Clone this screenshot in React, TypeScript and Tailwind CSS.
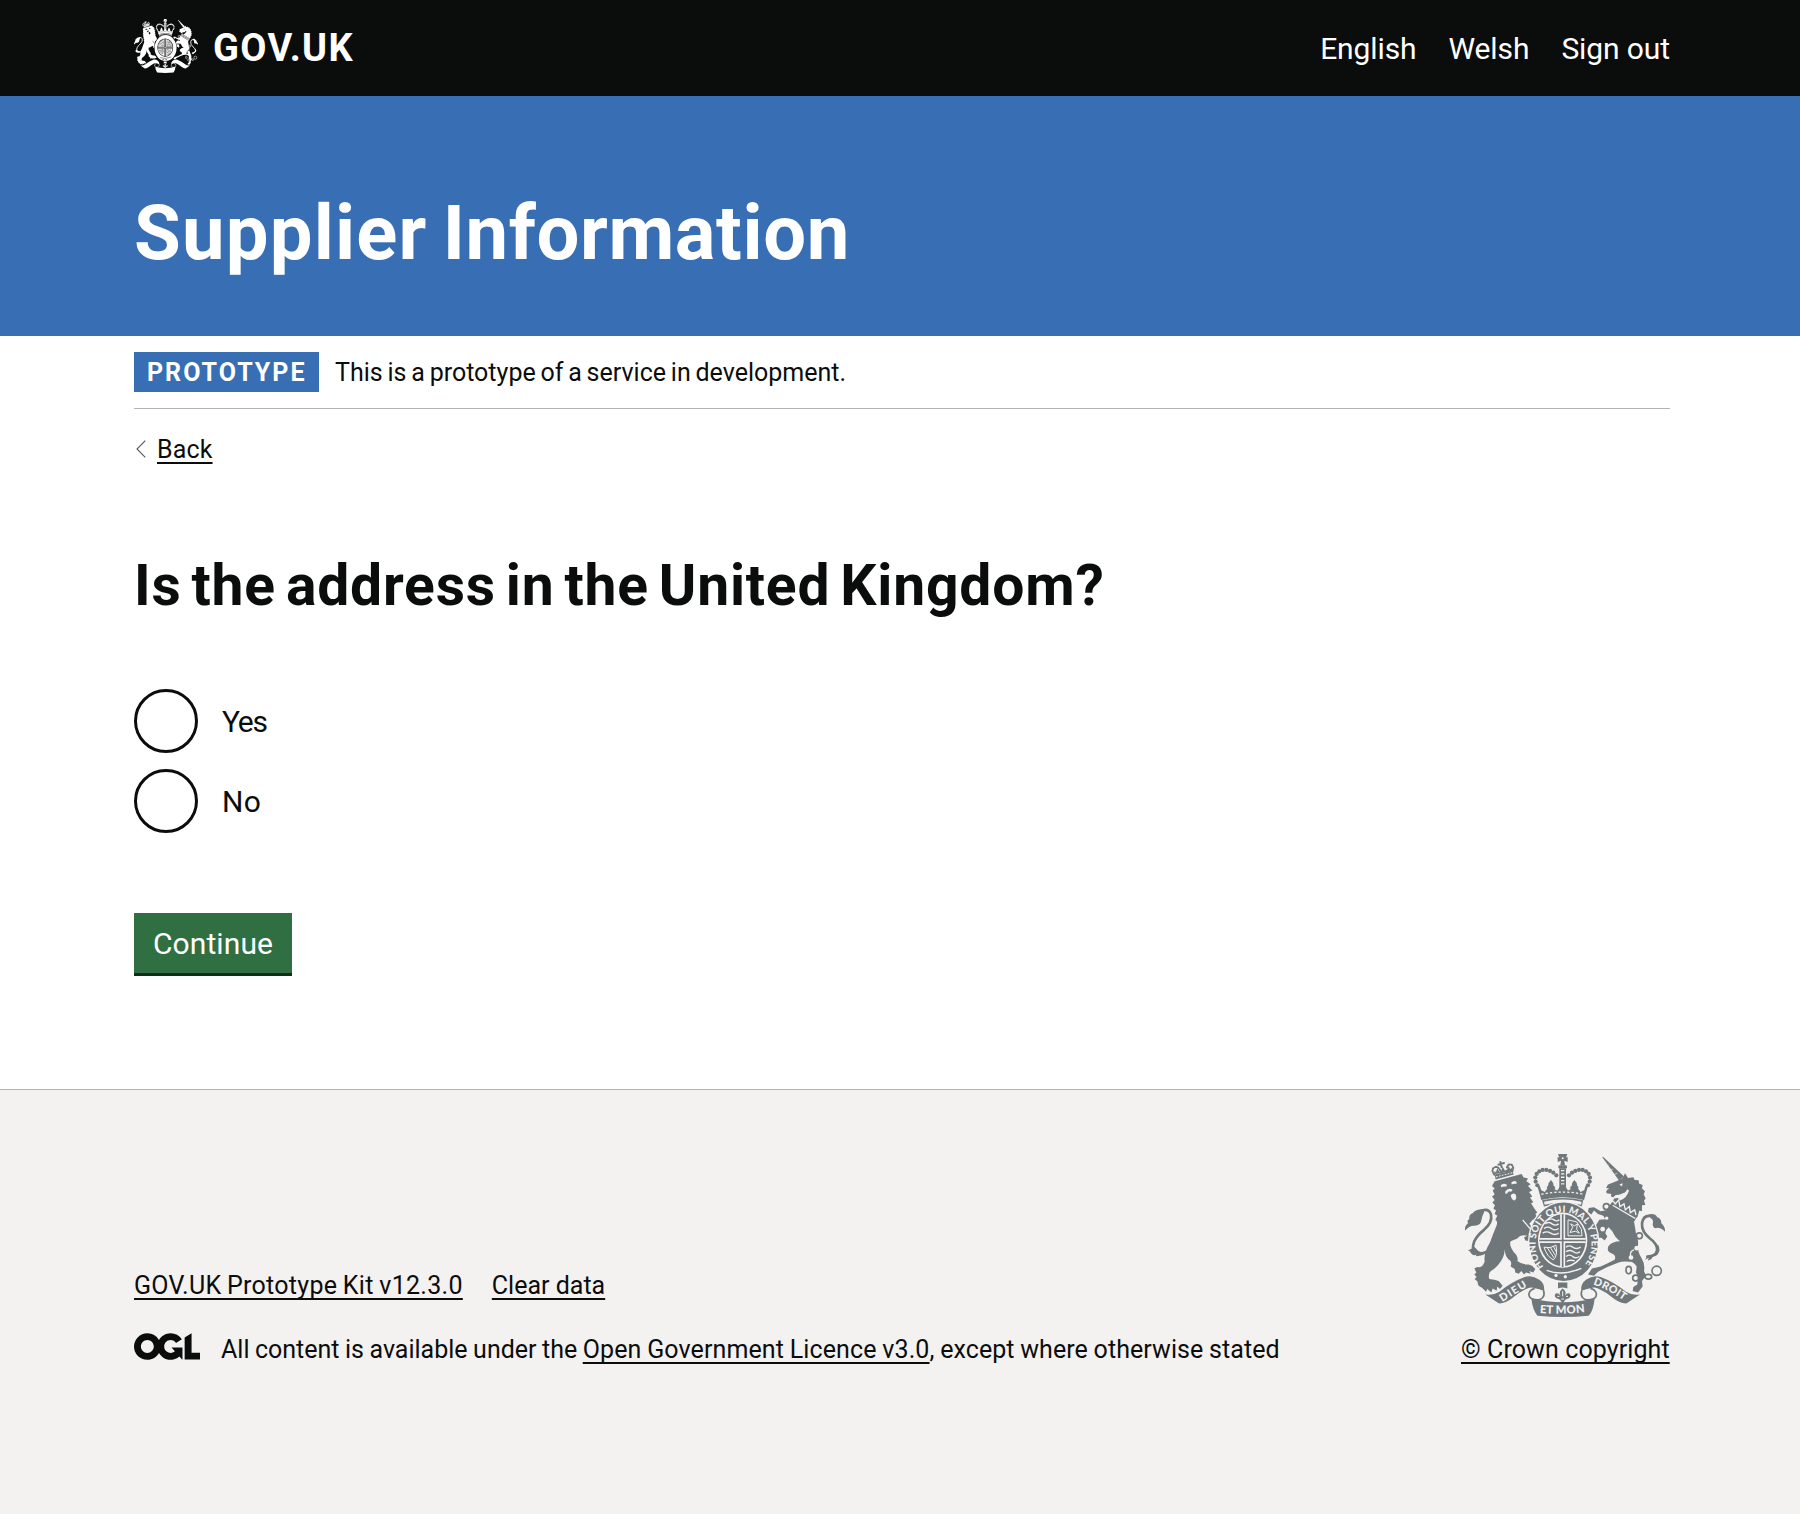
import React from "react";

type CrestProps = { className: string; ink: string; paper: string; motto?: boolean };

const OUTER_BEADS = [
  [292, 136], [287, 125], [286, 113], [290, 102], [298, 94], [308, 90], [319, 90], [330, 93], [340, 98], [349, 106],
  [444, 136], [449, 125], [450, 113], [446, 102], [438, 94], [428, 90], [417, 90], [406, 93], [396, 98], [387, 106],
];

function Crest({ className, ink, paper, motto = false }: CrestProps) {
  const id = motto ? "m" : "s";
  return (
    <svg className={className} viewBox="75 42 600 490" preserveAspectRatio="none" fill={ink} aria-hidden="true">
      {/* lion: crown */}
      <g>
        <path d="M164 104 L217 92 L221 104 L167 119 Z" />
        <path d="M166 102 L160 94 L168 96 L172 84 L178 96 L184 92 L188 80 L195 92 L202 88 L206 78 L211 88 L217 82 L216 94 Z" />
        <g fill="none" stroke={ink} strokeWidth="6" strokeLinecap="round">
          <path d="M163 104 Q152 90 163 82 Q174 77 181 92 M217 94 Q223 80 214 74 Q202 70 200 88" strokeDasharray="4 5" />
          <path d="M185 82 L181 66 M175 74 L192 69" strokeWidth="6" />
        </g>
        <path d="M168 111 L218 98" stroke={paper} strokeWidth="3" strokeDasharray="5 4" />
      </g>
      {/* lion: tail */}
      <path d="M150 328 Q135 344 112 340 Q92 334 103 304 Q112 286 132 270 Q158 248 153 224 Q148 206 128 211 Q116 215 110 228" fill="none" stroke={ink} strokeWidth="8" strokeLinecap="round" />
      <path d="M132 208 Q108 206 98 220 Q86 224 88 238 Q80 240 84 250 Q78 254 75 263 L75 273 Q90 256 104 258 Q122 256 124 242 Q126 228 132 218 Z" />
      <path d="M101 320 Q94 330 84 331 Q92 334 92 339 Q98 350 110 344 Q104 350 114 349 Q134 346 140 336 Q116 340 108 326 Z" />
      {/* lion: body */}
      <path d="M164 124 L245 102 L250 112 L264 116 L259 124 L272 133 L264 138 L277 152 L267 156 L277 170 L270 173 L280 187 L273 190 L284 207 L292 218 L286 222 L294 236 L278 240 L268 252 Q280 268 296 290 L300 296 L296 318 Q276 322 268 312 L272 304 L256 302 L252 292 L262 288 Q244 282 232 296 L212 304 Q206 316 222 338 Q236 350 232 364 Q246 376 266 374 L276 378 L286 388 L280 398 L268 394 L272 402 L258 398 L252 404 L244 394 L236 402 L226 398 L224 388 L212 380 Q216 366 210 362 Q192 350 195 322 Q194 346 184 362 Q172 382 150 396 Q144 408 148 418 Q164 420 176 424 L188 438 L180 448 L172 440 L170 453 L158 446 L154 458 L142 448 L138 456 L126 444 Q112 440 113 426 L104 418 L110 412 L103 404 L109 398 L103 386 L112 382 Q126 386 134 366 Q130 340 150 308 Q160 280 170 256 Q174 244 166 240 L172 228 L164 222 L168 212 L160 206 L165 196 L157 188 L164 180 L156 170 L164 164 L158 152 L164 146 L156 138 Z" />
      <g fill={paper}>
        <path d="M182 136 Q190 128 200 134 L200 140 Q190 138 184 142 Z M214 128 Q222 120 230 126 L229 132 Q222 130 215 134 Z" />
        <path d="M196 154 Q208 142 218 150 Q214 158 207 154 Q202 162 196 162 Z M212 166 Q220 156 227 164 Q232 176 224 182 Q214 180 212 166 Z" />
      </g>
      <path d="M248 240 Q266 262 284 282" fill="none" stroke={paper} strokeWidth="4" />
      {/* unicorn: horn, head */}
      <path d="M486 50 L491 52 L552 110 L537 122 Z" />
      <path d="M500 78 L506 75 M512 90 L519 87 M524 103 L532 100" stroke={paper} strokeWidth="2" />
      <path d="M534 122 L548 114 L555 100 L564 114 L580 112 L584 120 L596 121 L597 131 L608 135 L606 146 L615 154 L611 163 L617 176 L612 182 L616 195 L606 196 L606 214 L598 212 L592 232 L518 188 L522 176 Q548 176 554 158 Q540 166 526 166 L520 172 Q510 172 514 162 L500 160 Q495 152 508 146 L498 144 L504 134 Q520 128 534 122 Z" />
      <path d="M538 134 L548 130 L546 140 Z M528 166 Q552 168 562 148 L567 152 Q560 176 540 182 Z" fill={paper} />
      {/* unicorn: body */}
      <path d="M516 186 L592 230 L582 246 Q586 266 588 282 Q596 298 594 314 Q592 336 604 354 Q616 374 612 394 L618 408 L606 424 L608 440 L594 458 L578 454 L580 442 L592 434 L594 412 L588 398 L590 380 Q580 364 568 366 Q548 364 536 368 L502 382 L474 396 L462 408 L444 404 L456 386 L482 380 L500 372 L524 360 Q530 346 514 340 Q498 334 506 318 Q518 304 540 304 Q524 292 518 276 L506 262 Q498 268 496 280 L502 290 L494 302 L484 294 L470 294 L464 274 L452 268 L454 252 L468 256 L478 240 L496 238 L490 228 L474 222 L462 212 L454 224 L444 216 L446 204 L462 202 L482 214 L500 210 Z" />
      <path d="M572 352 Q568 334 582 330" fill="none" stroke={paper} strokeWidth="4" />
      {/* unicorn: coronet collar */}
      <path d="M518 196 L586 236 M520 184 L526 192 L536 180 L540 200 L552 192 L556 210 L568 200 L571 218 L584 210 L588 226" fill="none" stroke={paper} strokeWidth="4" />
      {/* unicorn: tail */}
      <path d="M622 350 Q650 350 652 332 Q652 312 630 296 Q604 276 606 250 Q610 226 630 228 Q644 230 648 244" fill="none" stroke={ink} strokeWidth="8" strokeLinecap="round" />
      <path d="M626 224 Q644 218 652 232 Q664 236 664 250 Q676 260 675 276 Q664 264 652 264 Q640 268 638 254 Q642 240 630 232 Z M654 314 Q662 330 656 338 Q652 350 640 348 Q634 362 624 362 L626 354 L616 360 Q620 346 634 346 Q650 340 648 320 Z" />
      {/* unicorn: chain */}
      <g fill={paper} stroke={ink} strokeWidth="5">
        <circle cx="499" cy="200" r="9" />
        <circle cx="598" cy="288" r="9" />
        <ellipse cx="566" cy="391" rx="8" ry="11" />
        <circle cx="587" cy="415" r="9" />
        <ellipse cx="625" cy="411" rx="10" ry="7" />
        <circle cx="650" cy="393" r="14" />
      </g>
      <g fill={paper}><circle cx="590" cy="325" r="7" /><circle cx="573" cy="353" r="7" /><circle cx="488" cy="268" r="7" /><circle cx="500" cy="235" r="5" /></g>

      {/* royal crown */}
      <path d="M354 42 L382 42 L378 53 L383 50 L383 66 L373 62 L375 76 L361 76 L363 62 L353 66 L353 50 L358 53 Z" />
      <circle cx="368" cy="55" r="3" fill={paper} />
      <rect x="355" y="76" width="26" height="10" rx="4" />
      {OUTER_BEADS.map(([x, y]) => (<circle key={`${x}-${y}`} cx={x} cy={y} r="6.3" />))}
      <path d="M358 86 H378 V150 H358 Z" />
      <path d="M363 92 H373 M363 102 H373 M363 112 H373 M363 122 H373 M363 132 H373" stroke={paper} strokeWidth="4" />
      <path d="M292 138 Q300 132 303 150 L314 156 L322 146 Q318 140 324 138 Q324 128 333 120 Q341 128 341 138 Q348 140 344 148 L352 152 Q360 138 368 134 Q376 138 384 152 L392 148 Q388 140 395 138 Q395 128 403 120 Q412 128 412 138 Q418 140 414 146 L422 156 L433 150 Q436 132 444 138 L432 180 Q368 164 304 180 Z" />
      <path d="M304 163 Q368 150 432 163" fill="none" stroke={paper} strokeWidth="4" strokeDasharray="7 6" />
      <path d="M306 181 Q368 168 430 181 L425 200 Q368 186 312 200 Z" />
      <path d="M313 190 Q368 177 424 190" fill="none" stroke={paper} strokeWidth="9" />

      {/* garter */}
      <ellipse cx="371" cy="306" rx="107" ry="122" fill={paper} />
      <ellipse cx="371" cy="306" rx="103" ry="118" />
      <ellipse cx="368" cy="301" rx="74" ry="83" fill={paper} />
      <ellipse cx="368" cy="301" rx="69" ry="78" />
      <g stroke={paper} fill="none">
        <path d="M368 223 V382 M298 302 H437" strokeWidth="15" />
        <path d="M316 252 q10 -8 20 0 t20 0 M312 266 q12 -8 22 0 t22 0 M308 280 q12 -8 24 0 t24 0 M324 240 q10 -6 18 0 t16 0" strokeWidth="4" />
        <path d="M378 322 q10 -8 20 0 t24 0 M378 336 q12 -8 22 0 t20 0 M378 350 q12 -8 20 0 t20 0 M380 365 q10 -6 24 -2" strokeWidth="4" />
        <path d="M384 240 L410 246 L424 268 L426 288 L384 288 Z M390 278 L398 262 L392 252 L404 258 L412 252 L410 268 L418 280 L406 274 Z" strokeWidth="3" />
        <path d="M312 322 Q330 328 348 316 Q354 348 340 360 Q322 352 312 322 M322 324 L342 354 M331 323 L346 347 M340 319 L349 337" strokeWidth="3" />
      </g>
      <path d="M368 223 V382 M298 302 H437" stroke={ink} strokeWidth="5" fill="none" />
      <path d="M320 392 Q366 410 424 386" fill="none" stroke={paper} strokeWidth="4" />
      <circle cx="348" cy="407" r="5" fill={paper} /><circle cx="376" cy="411" r="5" fill={paper} />

      {/* fleur-de-lis pendant */}
      <path d="M354 428 H382 V446 Q368 440 354 446 Z" />
      <path d="M368 446 Q382 456 374 468 Q382 458 390 462 Q396 474 380 478 L376 480 L368 492 L360 480 L356 478 Q340 474 346 462 Q354 458 362 468 Q354 456 368 446 Z" />
      <path d="M368 454 V470 M352 470 H358 M378 470 H384 M364 478 H372" stroke={paper} strokeWidth="3" />

      {/* ribbon */}
      <path d="M136 464 Q160 468 178 456 Q216 426 254 412 Q276 404 298 420 Q316 432 312 458 Q300 446 284 446 Q276 440 262 446 Q238 456 216 476 Q196 492 176 491 Z" />
      <path d="M600 464 Q576 468 558 456 Q520 426 482 412 Q460 404 438 420 Q420 432 424 458 Q436 446 452 446 Q460 440 474 446 Q498 456 520 476 Q540 492 560 491 Z" />
      <path d="M284 446 Q262 454 268 470 Q274 482 300 480 Q318 470 310 452 M452 446 Q474 454 468 470 Q462 482 436 480 Q418 470 426 452" fill={paper} stroke={ink} strokeWidth="5" />
      <path d="M274 476 Q368 500 464 476 Q460 516 446 528 Q368 536 292 528 Q278 512 274 476 Z" />
      {motto && (
        <g fill={paper} className="font-['Lato'] font-black">
          <path id={`${id}a`} d="M311 380 A84 95 0 1 1 424 386" fill="none" />
          <path id={`${id}b`} d="M187 487 Q220 466 270 436" fill="none" />
          <path id={`${id}c`} d="M459 434 Q510 452 556 486" fill="none" />
          <path id={`${id}d`} d="M299 520 Q368 526 440 517" fill="none" />
          <text fontSize="29"><textPath href={`#${id}a`} textLength="418" lengthAdjust="spacing">HONI SOIT QUI MAL Y PENSE</textPath></text>
          <text fontSize="32"><textPath href={`#${id}b`} textLength="88">DIEU</textPath></text>
          <text fontSize="32"><textPath href={`#${id}c`} textLength="104">DROIT</textPath></text>
          <text fontSize="34"><textPath href={`#${id}d`} textLength="136">ET MON</textPath></text>
        </g>
      )}
    </svg>
  );
}

function OglLogo() {
  return (
    <svg className="mr-[21px] mb-[7px] h-[27px] w-[66px] shrink-0" viewBox="0 0 483.2 195.7" fill="#0b0d0c" aria-hidden="true">
      <path d="M421.5 142.8V.1l-50.7 32.3v161.1h112.4v-50.7zm-122.3-9.6A47.12 47.12 0 0 1 221 97.8c0-26 21.1-47.1 47.1-47.1 16.7 0 31.4 8.7 39.7 21.8l42.7-27.2A97.63 97.63 0 0 0 268.1 0c-36.5 0-68.3 20.1-85.1 49.7A98 98 0 0 0 97.8 0C43.9 0 0 43.9 0 97.8s43.9 97.8 97.8 97.8c36.5 0 68.3-20.1 85.1-49.7a97.76 97.76 0 0 0 149.6 25.4l19.4 22.2h3v-87.8h-80l24.3 27.5zM97.8 145c-26 0-47.1-21.1-47.1-47.1s21.1-47.1 47.1-47.1 47.1 21.1 47.1 47.1S123.8 145 97.8 145" />
    </svg>
  );
}

const link = "underline decoration-2 underline-offset-4 [text-decoration-skip-ink:none]";

function Radio({ label, tracking }: { label: string; tracking: string }) {
  return (
    <label className="flex h-16 items-center">
      <span className="size-16 rounded-full border-[3px] border-[#0b0d0c]" />
      <span className={`ml-6 pt-0.5 text-[30px] leading-9 ${tracking}`}>{label}</span>
    </label>
  );
}

export default function App() {
  return (
    <div className="flex min-h-[1514px] flex-col bg-white font-['Roboto',sans-serif] text-[25px] text-[#0b0d0c]">
      <header className="h-24 bg-[#0b0d0c] pr-[130px] pl-[134px] text-white">
        <div className="flex h-full items-center justify-between">
          <a className="flex items-center">
            <Crest className="mb-1 h-[54px] w-16" ink="#ffffff" paper="#0b0d0c" />
            <span className="ml-[15px] text-[38px] leading-none font-bold tracking-[1.4px]">GOV.UK</span>
          </a>
          <nav className="flex gap-8 pt-px text-[30px] leading-9 tracking-[-0.1px]">
            <a>English</a>
            <a>Welsh</a>
            <a>Sign out</a>
          </nav>
        </div>
      </header>

      <div className="h-60 bg-[#386eb4] px-[134px] pt-[92px]">
        <p className="text-[76px] leading-[90px] font-bold text-white">
          <span className="tracking-[1.2px]">Supplier </span>
          <span className="ml-[-5px] tracking-[0.6px]">Information</span>
        </p>
      </div>

      <main className="pr-[130px] pl-[134px]">
        <div className="flex h-[73px] items-center border-b border-[#b1b4b6]">
          <strong className="flex h-10 w-[185px] items-center bg-[#386eb4] pt-0.5 pl-[13px] tracking-[2px] text-white">PROTOTYPE</strong>
          <span className="ml-4 pt-0.5 [word-spacing:-1.4px]">This is a prototype of a service in development.</span>
        </div>

        <a className="mt-6 flex h-8 items-center">
          <svg className="ml-[2px] h-[18px] w-[10px]" viewBox="0 0 10 18" fill="none" stroke="#505a5f" strokeWidth="1.1" aria-hidden="true">
            <path d="M9.3 0.6 L1 9 L9.3 17.4" />
          </svg>
          <span className={`ml-[11px] pt-0.5 tracking-[0.15px] ${link}`}>Back</span>
        </a>

        <h1 className="mt-[89px] text-[57px] leading-[64px] font-bold tracking-[0.8px] [word-spacing:-5px]">Is the address in the United Kingdom?</h1>

        <fieldset className="mt-[71px] flex flex-col gap-4">
          <Radio label="Yes" tracking="tracking-[-1.2px]" />
          <Radio label="No" tracking="tracking-[0.4px]" />
        </fieldset>

        <button className="mt-20 flex h-[60px] w-[158px] items-center justify-center bg-[#2f6f41] text-[30px] tracking-[0.1px] text-white shadow-[0_3px_0_#132d1a]">Continue</button>
      </main>

      <footer className="mt-[116px] flex grow items-start justify-between border-t border-[#b1b4b6] bg-[#f3f2f1] pr-[130px] pl-[134px] pt-16">
        <div className="pt-[116px]">
          <div className="flex h-8 items-center gap-[29px]">
            <a className={`tracking-[0.3px] [word-spacing:-1px] ${link}`}>GOV.UK Prototype Kit v12.3.0</a>
            <a className={link}>Clear data</a>
          </div>
          <div className="mt-8 flex h-8 items-center">
            <OglLogo />
            <span className="whitespace-pre">
              <span className="[word-spacing:-0.7px]">All content is available under the </span>
              <a className={`tracking-[0.1px] [word-spacing:-0.5px] ${link}`}>Open Government Licence v3.0</a>
              <span className="tracking-[0.07px] [word-spacing:-0.6px]">, except where otherwise stated</span>
            </span>
          </div>
        </div>
        <a className="flex w-[209px] flex-col">
          <Crest className="ml-1 h-[163px] w-[200px]" ink="#6f777a" paper="#f3f2f1" motto />
          <span className={`mt-[17px] leading-8 tracking-[0.1px] whitespace-nowrap ${link}`}>© Crown copyright</span>
        </a>
      </footer>
    </div>
  );
}
